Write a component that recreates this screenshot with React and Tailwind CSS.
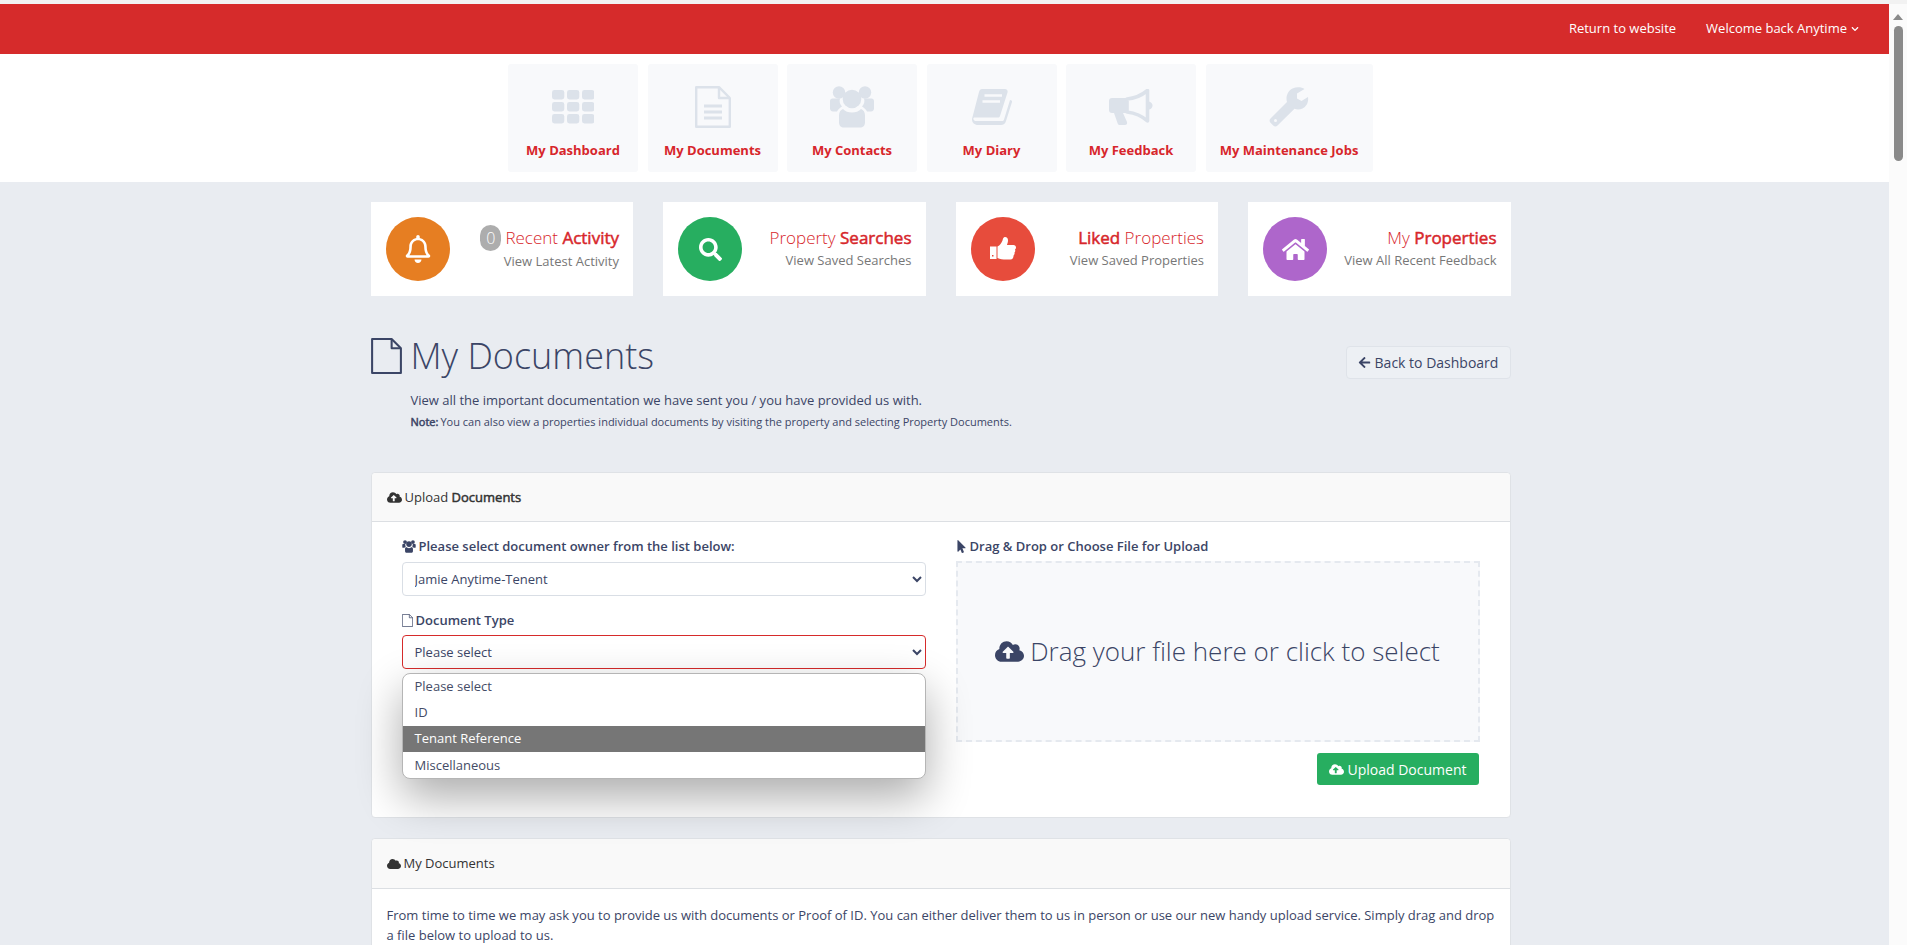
import {
  FaArrowLeft,
  FaChevronDown,
  FaCloud,
  FaCloudUploadAlt,
  FaHome,
  FaMousePointer,
  FaRegBell,
  FaSearch,
} from 'react-icons/fa';

function ThIcon() {
  const xs = [0, 15, 30];
  const ys = [0, 12, 24];
  return (
    <svg width="42" height="34" viewBox="0 0 42 34" fill="#dce2ea">
      {ys.map((y) =>
        xs.map((x) => <rect key={`${x}-${y}`} x={x} y={y} width="12.3" height="9.4" rx="2.4" />)
      )}
    </svg>
  );
}

function FileIcon({ className, lines = true }) {
  return (
    <svg className={className} viewBox="0 0 36 42" fill="none" stroke="currentColor" strokeWidth="2.4" strokeLinejoin="round">
      <path d="M1.2 1.2H24L34.8 12V40.8H1.2Z" />
      <path d="M24 1.2V12H34.8" />
      {lines && <path d="M9 20H27M9 26H27M9 32H27" strokeWidth="3" />}
    </svg>
  );
}

function GroupIcon({ className }) {
  return (
    <svg className={className} viewBox="0 0 46 42" fill="currentColor">
      <circle cx="10" cy="6.500" r="6.200" />
      <circle cx="36" cy="6.500" r="6.200" />
      <path d="M1 15c0-1.500 1-2.500 2.500-2.500H11c-1 3 0 6 2 8-2 1-4 3-5 5H4c-2 0-3-1.500-3-3Z" />
      <path d="M45 15c0-1.500-1-2.500-2.500-2.500H35c1 3 0 6-2 8 2 1 4 3 5 5h4c2 0 3-1.500 3-3Z" />
      <circle cx="23" cy="13" r="9.300" />
      <path d="M14 23c2 2.500 5.500 3.500 9 3.500s7-1 9-3.500c2.500 1 4 3 4 6.500v7c0 3-2 5-5 5H15c-3 0-5-2-5-5v-7c0-3.500 1.500-5.500 4-6.500Z" />
    </svg>
  );
}

function BookIcon() {
  return (
    <svg width="40" height="36" viewBox="0 0 40 36">
      <path fill="#dce2ea" d="M10 0H33c2 0 3 1.500 2.500 3.500L28 27c-.4 1-1 1.500-2 1.500H3c-1.500 0-2 1-1.500 2 .5 1 1.500 1.500 3 1.500H30c1 0 1.700-.5 2-1.500L38 11l1.500.5c.5.200.7.800.5 1.500L34 32c-.7 2.500-2.500 4-5 4H6c-3.500 0-6-2.500-6-5.500 0-1 .2-1.800.5-2.500L7 3c.5-1.800 1.500-3 3-3Z" />
      <path stroke="#f8f9fb" strokeWidth="2.500" d="M12.500 6.500H30M10.500 12.500H28" />
    </svg>
  );
}

function HornIcon() {
  return (
    <svg width="44" height="36" viewBox="0 0 44 36" fill="#dce2ea">
      <path d="M3 9H18V24H3C1 24 0 23 0 21V12C0 10 1 9 3 9Z" />
      <path d="M5 24H14L18 33C18.500 35 17.500 36 16 36H11C10 36 9 35.500 8.700 34.500Z" />
      <path fill="none" stroke="#dce2ea" strokeWidth="3.600" strokeLinejoin="round" d="M18 10C26 9.500 33 6 38.500 1.500V32C33 27 26 24 18 23Z" />
      <path d="M40 12.500C42.500 13 43.500 15 43.500 16.500S42.500 20 40 20.500Z" />
    </svg>
  );
}

function WrenchIcon() {
  return (
    <svg width="40" height="40" viewBox="0 0 40 40" fill="#dce2ea">
      <path d="M23.500 1.500C28 -.5 33 .3 35.500 2L28 6.500V11.500L32.500 14L39 10c.8 5-1.500 9.500-5.500 11.500-2.500 1.200-5.500 1.300-8 .3L8.500 38.500c-1.300 1.300-3 1.300-4.300 0L1.500 35.800c-1.200-1.200-1.200-3 0-4.300L18 15c-1.500-5 .5-11 5.500-13.500Z" />
      <circle cx="6.500" cy="33.500" r="1.500" fill="#f8f9fb" />
    </svg>
  );
}

function ThumbIcon() {
  return (
    <svg width="26" height="24" viewBox="0 0 26 24" fill="white">
      <path fillRule="evenodd" d="M0 9.500H6.500V22H0ZM2 18V19.500H3.500V18Z" />
      <path d="M7.500 9.500C10 8.500 11.500 6 12.500 3.500 13 1.500 13.500 0 15 0 17 0 18 1.500 18 3.500 18 5.500 17 7 17 8H23.500C25 8 26 9 26 10.500 26 11.500 25.500 12 25 12.500 25.500 13.500 25.300 15 24.500 15.500 24.800 16.800 24.300 18 23.500 18.500 23.700 20.500 22.500 22.500 20.500 22.500H16C13 22.500 10 22 7.500 21Z" />
    </svg>
  );
}

const tiles = [
  { label: 'My Dashboard', icon: <ThIcon /> },
  { label: 'My Documents', icon: <FileIcon className="w-[36px] h-[42px] text-[#dce2ea]" /> },
  { label: 'My Contacts', icon: <GroupIcon className="w-[46px] h-[42px] text-[#dce2ea]" /> },
  { label: 'My Diary', icon: <BookIcon /> },
  { label: 'My Feedback', icon: <HornIcon /> },
  { label: 'My Maintenance Jobs', icon: <WrenchIcon />, wide: true },
];

// regular glyph widths with a thickened stroke, the way the site's strong text renders
const strong = 'font-normal [-webkit-text-stroke:0.5px_currentColor]';

const cards = [
  {
    color: 'bg-[#e67e22]',
    icon: <FaRegBell className="w-[26px] h-[28px]" />,
    badge: '0',
    title: <>Recent <b className={strong}>Activity</b></>,
    sub: 'View Latest Activity',
  },
  {
    color: 'bg-[#27ae60]',
    icon: <FaSearch className="w-[23px] h-[23px]" />,
    title: <>Property <b className={strong}>Searches</b></>,
    sub: 'View Saved Searches',
  },
  {
    color: 'bg-[#e74c3c]',
    icon: <ThumbIcon />,
    title: <><b className={strong}>Liked</b> Properties</>,
    sub: 'View Saved Properties',
  },
  {
    color: 'bg-[#ae66cb]',
    icon: <FaHome className="w-[27px] h-[25px]" />,
    title: <>My <b className={strong}>Properties</b></>,
    sub: 'View All Recent Feedback',
  },
];

function Scrollbar() {
  return (
    <div className="w-[18px] shrink-0 bg-[#fbfbfb] flex flex-col items-center pt-[10px] gap-[6px]">
      <div className="w-0 h-0 border-x-[5px] border-x-transparent border-b-[6px] border-b-[#8a8a8a]" />
      <div className="w-[9px] h-[135px] rounded-full bg-[#8a8a8a]" />
    </div>
  );
}

export default function App() {
  return (
    <div className="h-[945px] overflow-hidden flex flex-col bg-[#f2f2f2] pt-[4px] font-['Open_Sans',sans-serif] text-[#3b4566]">
      <div className="flex flex-1 min-h-0">
        <div className="flex-1 min-w-0 bg-[#e9ecf1]">

          {/* TOP BAR */}
          <header className="h-[50px] bg-[#d62b2b] flex items-center justify-end gap-[30px] pr-[30px] text-[13px] text-white">
            <span>Return to website</span>
            <span className="flex items-center gap-[4px]">
              Welcome back Anytime
              <FaChevronDown className="w-[8px] h-[8px]" />
            </span>
          </header>

          {/* ICON NAV */}
          <nav className="h-[128px] bg-white pt-[10px] pl-[508px] flex gap-[9.5px]">
            {tiles.map((t) => (
              <div
                key={t.label}
                className={`${t.wide ? 'w-[167px]' : 'w-[130px]'} h-[108px] bg-[#f8f9fb] rounded-[3px] flex flex-col items-center`}
              >
                <div className="mt-[22px] h-[42px] w-full flex items-center justify-center">{t.icon}</div>
                <span className="mt-[13px] text-[13px] leading-[18px] font-bold text-[#d7262b] whitespace-nowrap">{t.label}</span>
              </div>
            ))}
          </nav>

          <main className="w-[1140px] ml-[370.5px]">

            {/* STAT CARDS */}
            <div className="grid grid-cols-4 gap-[30px] mt-[20px]">
              {cards.map((c) => (
                <div key={c.sub} className="h-[94px] bg-white flex items-center justify-between pl-[15px] pr-[14px]">
                  <div className={`w-[64px] h-[64px] rounded-full ${c.color} text-white flex items-center justify-center`}>
                    {c.icon}
                  </div>
                  <div className="text-right -mt-[3px]">
                    <div className="flex items-center justify-end gap-[4px] text-[17px] font-light text-[#d7262b] leading-[24px]">
                      {c.badge && (
                        <span className="w-[21px] h-[26px] rounded-full bg-[#adadad] text-white text-[16px] font-light flex items-center justify-center">
                          {c.badge}
                        </span>
                      )}
                      <span>{c.title}</span>
                    </div>
                    <div className="text-[13px] text-[#777] leading-[18px] mt-[1px]">{c.sub}</div>
                  </div>
                </div>
              ))}
            </div>

            {/* PAGE HEADING */}
            <div className="flex justify-between mt-[41px] h-[135px]">
              <div className="flex gap-[9px]">
                <FileIcon className="w-[31px] h-[36px] text-[#3b4566] shrink-0 mt-[1px]" lines={false} />
                <div>
                  <h1 className="text-[36px] font-light leading-[38px]">My Documents</h1>
                  <p className="text-[13px] mt-[16px] leading-[18px]">
                    View all the important documentation we have sent you / you have provided us with.
                  </p>
                  <p className="text-[11px] mt-[5px] leading-[16px]">
                    <b className={`${strong} mr-[2px]`}>Note:</b>You can also view a properties individual documents by visiting the property and selecting Property Documents.
                  </p>
                </div>
              </div>
              <button className="h-[33px] w-[165px] mt-[9px] rounded-[4px] border border-[#dfe3e9] bg-[#edf0f4] text-[14px] flex items-center justify-center gap-[4px]">
                <FaArrowLeft className="w-[13px] h-[13px]" />
                Back to Dashboard
              </button>
            </div>

            {/* UPLOAD PANEL */}
            <section className="h-[346px] bg-white rounded-[4px] border border-[#dfe2e6]">
              <div className="h-[49px] bg-[#f9f9f9] border-b border-[#dcdfe3] rounded-t-[4px] flex items-center pl-[15px] pt-[1px] text-[13px] gap-[3px] text-[#333]">
                <FaCloudUploadAlt className="w-[15px] h-[15px]" />
                <span>Upload <b className={strong}>Documents</b></span>
              </div>
              <div className="grid grid-cols-2 px-[30px] gap-[30px] pt-[15px]">
                <div className="relative">
                  <label className="flex items-center gap-[3px] text-[13px] font-semibold leading-[18px]">
                    <GroupIcon className="w-[14px] h-[13px]" />
                    Please select document owner from the list below:
                  </label>
                  <select className="mt-[7px] w-full h-[34px] rounded-[4px] border border-[#d9dee5] bg-white px-[8px] text-[13px]">
                    <option>Jamie Anytime-Tenent</option>
                  </select>
                  <label className="mt-[15px] flex items-center gap-[3px] text-[13px] font-semibold leading-[18px]">
                    <FileIcon className="w-[11px] h-[13px]" lines={false} />
                    Document Type
                  </label>
                  <select className="mt-[6px] w-full h-[34px] rounded-[4px] border border-[#d62b2b] bg-white px-[8px] text-[13px]">
                    <option>Please select</option>
                  </select>

                  {/* OPEN DROPDOWN */}
                  <ul className="absolute left-0 right-0 top-[136px] z-10 h-[106px] bg-white rounded-[8px] border border-[#b5b5b5] overflow-hidden text-[13px] text-[#444c66] shadow-[0_18px_45px_rgba(0,0,0,0.33)]">
                    <li className="h-[26px] flex items-center pl-[12px]">Please select</li>
                    <li className="h-[26px] flex items-center pl-[12px]">ID</li>
                    <li className="h-[26px] flex items-center pl-[12px] bg-[#767676] text-white">Tenant Reference</li>
                    <li className="h-[27px] flex items-center pl-[12px]">Miscellaneous</li>
                  </ul>
                </div>

                <div>
                  <label className="flex items-center gap-[3px] text-[13px] font-semibold leading-[18px]">
                    <FaMousePointer className="w-[11px] h-[13px]" />
                    Drag &amp; Drop or Choose File for Upload
                  </label>
                  <div className="mt-[6px] h-[181px] border-2 border-dashed border-[#e5e9ef] bg-[#f8f9fb] flex items-center justify-center gap-[6px] text-[26px] font-light">
                    <FaCloudUploadAlt className="w-[29px] h-[29px]" />
                    Drag your file here or click to select
                  </div>
                  <div className="flex justify-end mt-[11px] pr-[1px]">
                    <button className="w-[162px] h-[32px] bg-[#27ae60] rounded-[3px] text-white text-[14px] flex items-center justify-center gap-[4px]">
                      <FaCloudUploadAlt className="w-[15px] h-[15px]" />
                      Upload Document
                    </button>
                  </div>
                </div>
              </div>
            </section>

            {/* MY DOCUMENTS PANEL */}
            <section className="mt-[20px] h-[200px] bg-white rounded-[4px] border border-[#dfe2e6]">
              <div className="h-[50px] bg-[#f9f9f9] border-b border-[#dcdfe3] rounded-t-[4px] flex items-center pl-[15px] text-[13px] gap-[3px] text-[#333]">
                <FaCloud className="w-[14px] h-[14px]" />
                <span>My Documents</span>
              </div>
              <p className="px-[15px] pt-[16px] text-[13px] leading-[20px]">
                From time to time we may ask you to provide us with documents or Proof of ID. You can either deliver them to us in person or use our new handy upload service. Simply drag and drop a file below to upload to us.
              </p>
            </section>
          </main>
        </div>
        <Scrollbar />
      </div>
    </div>
  );
}
